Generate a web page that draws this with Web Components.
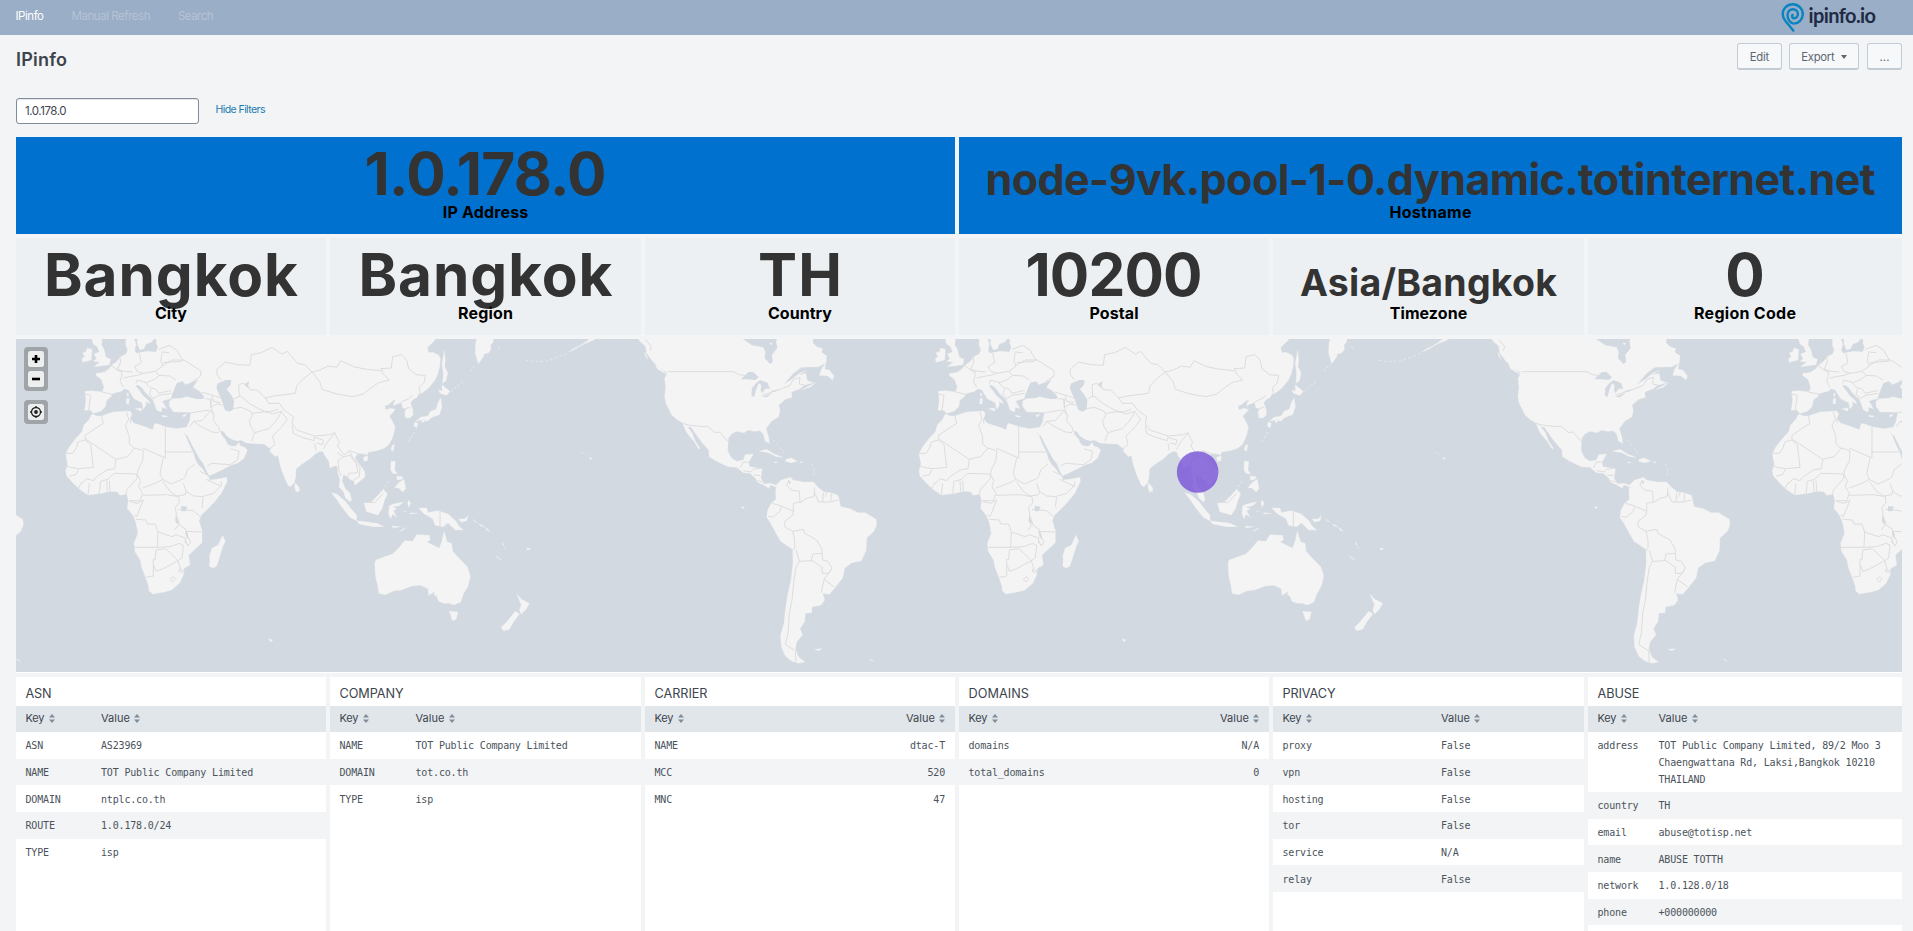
<!DOCTYPE html>
<html lang="en"><head><meta charset="utf-8"><title>IPinfo</title>
<style>
html,body{margin:0;height:100%;overflow:hidden;background:#f2f4f5;font-family:Inter,"Open Sans",sans-serif;color:#3c444d}
</style></head><body>
<ip-dashboard></ip-dashboard>
<script>
const define=(name,html,setup)=>customElements.define(name,class extends HTMLElement{
  connectedCallback(){
    if(this.shadowRoot)return;
    const t=document.createElement('template');t.innerHTML=html;
    this.attachShadow({mode:'open'}).append(t.content.cloneNode(true));
    if(setup)setup.call(this,this.shadowRoot);
  }
});

/* Text tracked so that it fills a given width. */
define('fit-text','<style>:host{display:inline-block;white-space:pre}</style><span><slot></slot></span>',function(r){
  const s=r.querySelector('span'),w=+this.getAttribute('w'),n=this.textContent.length;
  const ls=(w-s.getBoundingClientRect().width)/Math.max(1,n-1);
  if(w&&n>1){s.style.letterSpacing=ls+'px';s.style.marginRight=-ls+'px';}
});

define('nav-bar',`<style>
:host{display:flex;height:35px;box-sizing:border-box;background:#9aaec7;align-items:flex-start;padding:6px 37px 0 15.500px;font-size:11.5px;line-height:21px}
nav{display:flex;gap:27.500px;flex:1;color:#b6c3d3}
b{font-weight:400;color:#fff}
.logo{display:flex;gap:4px;margin-top:-3px;align-items:flex-start}
.logo span{font:700 20px/24px Lato,sans-serif;color:#1f2b45}
svg{display:block}
</style><nav><b><fit-text w="28.5">IPinfo</fit-text></b><fit-text w="79">Manual Refresh</fit-text><fit-text w="35.5">Search</fit-text></nav>
<div class="logo"><svg width="24" height="30" viewBox="0 0 24 30" fill="none" stroke="#0a84c1" stroke-width="2.400" stroke-linecap="round" stroke-linejoin="round"><path d="M12.300 27.500 4.600 18.300C2.800 16.200 1.700 14 1.700 11.200 1.700 5.600 6.200 1.300 11.700 1.300 17.300 1.300 21.800 5.700 21.800 11.200 21.800 16.500 17.600 20.600 13 20.600 9.200 20.600 6.700 16.500 6.500 12.300 6.300 8.700 8.900 6.300 11.900 6.300 14.800 6.300 16.900 8.500 16.900 11.100 16.900 13.500 15.200 15.300 12.900 15.200 11.200 15.100 10.500 13.200 11.600 11.900"/></svg><span><fit-text w="67.500">ipinfo.io</fit-text></span></div>`);

define('tool-button',`<style>
:host{display:flex;align-items:center;justify-content:center;gap:6px;box-sizing:border-box;height:27px;border:1px solid #c3cbd4;border-bottom-width:2px;border-radius:3px;background:#f7f8fa;font-size:11.300px;color:#5c6773;padding-top:1px}
</style><slot></slot>`);

define('page-head',`<style>
:host{display:block}
.row{display:flex;justify-content:space-between;padding:8px 11px 0 16px;height:55px}
h1{margin:5px 0 0;font-size:18px;line-height:24px;font-weight:600;color:#3c444d}
.tools{display:flex;gap:7px}
.filters{display:flex;align-items:center;padding-left:16px;gap:16.500px;height:26px;font-size:10.500px}
.in{box-sizing:border-box;width:183px;height:26px;border:1px solid #818d99;border-radius:3px;background:#fff;box-shadow:inset 0 1px 1px #e4e7ea;padding:0 8px;font-size:11.500px;line-height:24px;color:#3c444d}
a{color:#1e7bb0;line-height:24px;align-self:flex-start}
</style><div class="row"><h1><fit-text w="51">IPinfo</fit-text></h1><div class="tools">
<tool-button style="width:45px"><fit-text w="19.500">Edit</fit-text></tool-button><tool-button style="width:70px"><fit-text w="33.500">Export</fit-text><svg width="6" height="4" viewBox="0 0 6 4"><path d="M0 0h6L3 4z" fill="#5c6773"/></svg></tool-button><tool-button style="width:35px;margin-left:1px"><fit-text w="10" style="margin-top:1px">...</fit-text></tool-button></div></div>
<div class="filters"><div class="in"><fit-text w="41.500">1.0.178.0</fit-text></div><a><fit-text w="50">Hide Filters</fit-text></a></div>`);

define('value-tile',`<style>
:host{display:flex;flex-direction:column;align-items:center;height:97px;background:#edf0f2;box-sizing:border-box;overflow:hidden}
:host([blue]){background:#0071ce}
.v{height:58px;display:flex;align-items:baseline;font-weight:700;color:#333}
.v::before{content:"";height:58px;display:inline-block}
.l{font-size:16px;font-weight:700;color:#000;line-height:20px;margin-top:7px;position:relative}
fit-text{line-height:0}
.l fit-text{line-height:20px}
</style><div class="v"></div><div class="l"></div>`,function(r){
  const g=a=>this.getAttribute(a);
  const add=(sel,txt,w)=>{const f=document.createElement('fit-text');f.textContent=txt;f.setAttribute('w',w);r.querySelector(sel).append(f);};
  r.querySelector('.v').style.fontSize=g('size')+'px';
  add('.v',g('value'),g('vw'));add('.l',g('label'),g('lw'));
});

define('kv-table',`<style>
:host{display:block;background:#fff;height:260px;box-sizing:border-box;overflow:hidden}
h2{margin:0;height:29px;box-sizing:border-box;padding:7px 10px 0 9.500px;font-size:12.700px;line-height:20px;font-weight:400;color:#3c444d}
.r{display:grid;grid-template-columns:var(--key) 1fr;padding:5px 10px 5px 9.500px;font:10px/16.660px "DejaVu Sans Mono",monospace;letter-spacing:-.175px;color:#4b535c;white-space:pre}
.r:nth-child(odd of .r){background:#fff}
.r:nth-child(even of .r){background:#f2f4f5}
.r span{position:relative;top:1.400px}
.h{display:grid;grid-template-columns:var(--key) 1fr;padding:0 10px 0 9.500px;height:26px;line-height:24px;background:#e1e6eb;font-size:11px;color:#3c444d}
:host([right]) .h span:last-child,:host([right]) .r span:last-child{text-align:right}
svg{margin-left:4px;vertical-align:-1px}
</style><h2></h2><div class="h"></div>`,function(r){
  r.host.style.setProperty('--key',this.getAttribute('key'));
  r.querySelector('h2').innerHTML='<fit-text w="'+this.getAttribute('tw')+'">'+this.getAttribute('name')+'</fit-text>';
  const a='<svg width="6" height="9" viewBox="0 0 6 9" fill="#818d99"><path d="M0 3.500h6L3 0zM0 5.500h6L3 9z"/></svg>';
  r.querySelector('.h').innerHTML='<span><fit-text w="19">Key</fit-text>'+a+'</span><span><fit-text w="29">Value</fit-text>'+a+'</span>';
  for(const line of this.getAttribute('rows').split(';')){
    const [k,v]=line.split('=');const d=document.createElement('div');d.className='r';
    for(const t of [k,v]){const s=document.createElement('span');s.textContent=t.replaceAll('|','\n');d.append(s);}
    r.append(d);
  }
});

define('world-map',`<style>
:host{display:block;position:relative;height:333px;background:#d3d9e0;border-bottom:1px solid #fff}
svg.m{display:block;width:100%;height:333px}
.ctl{position:absolute;left:8px;top:8px;width:24px;display:flex;flex-direction:column;gap:9px}
.g{background:#9fa4a8;border-radius:4px;padding:4px;display:flex;flex-direction:column;gap:4px}
.b{height:16px;border-radius:2.500px;background:#edeeee;display:grid;place-items:center}
</style>
<svg class="m" viewBox="48 27 5658 999" preserveAspectRatio="none"><defs><g id="w">
<g fill="#f4f4f4" stroke="#f4f4f4" stroke-width="1" stroke-linejoin="round">
<path d="M470 20H1310L1303 32 1295 40 1282 52 1286 68 1298 67 1315 75 1321 85 1319 110 1313 132 1305 150 1285 175 1265 190 1256 192 1250 203 1240 208 1231 218 1238 238 1239 255 1230 263 1217 264 1214 246 1219 238 1208 233 1204 217 1186 224 1180 228 1182 216 1190 208 1178 212 1165 224 1154 228 1157 240 1171 235 1186 238 1178 248 1168 258 1178 276 1185 290 1181 312 1174 330 1166 345 1152 355 1130 362 1106 366 1100 376 1094 372 1075 370 1064 383 1072 396 1084 410 1094 425 1095 440 1084 450 1064 466 1062 452 1049 448 1042 439 1030 434 1026 452 1030 462 1036 476 1050 490 1055 510 1050 515 1036 503 1030 484 1017 470 1020 450 1014 430 1012 408 1003 408 990 413 986 392 975 378 970 366 960 364 945 372 932 385 905 403 888 417 887 442 882 460 871 470 864 466 850 434 840 404 834 376 826 380 808 362 814 358 803 350 792 342 765 341 740 339 722 330 712 333 695 328 680 318 670 304 661 303 664 314 676 328 682 342 692 348 707 349 717 337 721 348 734 352 742 361 732 385 715 398 692 406 665 420 645 430 627 437 621 425 610 400 600 388 590 370 580 352 568 328 562 316 564 308 560 318 548 302 558 320 568 345 580 368 584 385 595 405 606 415 618 432 628 444 626 450 650 448 680 442 681 455 665 488 645 514 620 540 603 556 597 572 606 602 606 638 588 655 566 675 570 705 552 715 550 735 538 760 515 780 492 786 458 792 447 782 446 768 436 740 425 712 421 690 405 665 402 640 414 610 408 578 400 558 382 535 385 512 380 492 360 496 352 485 330 484 305 490 264 495 242 480 222 462 200 438 197 422 203 402 197 372 208 350 228 325 246 305 252 285 268 268 276 252 290 258 305 258 340 246 390 243 396 252 390 266 402 280 440 292 458 300 464 280 480 284 495 290 530 296 560 292 568 275 571 260 574 247 545 246 520 246 508 228 508 214 518 206 545 205 560 200 590 207 615 206 598 184 580 172 590 152 570 158 556 164 546 156 530 160 526 175 516 195 512 206 498 209 486 214 492 222 500 236 486 232 484 246 470 240 464 222 458 208 440 192 425 172 412 164 407 168 420 184 428 196 446 212 450 222 437 214 438 226 430 238 426 218 402 206 386 180 374 176 364 184 346 188 336 192 333 200 320 210 316 230 302 244 280 250 270 240 254 241 258 210 255 184 275 182 307 186 312 172 304 148 287 136 290 130 306 128 326 118 335 106 350 95 362 80 378 72 383 60 377 44 378 26 400 20 408 42 404 62 410 70 440 64 468 66 474 52 468 38Z"/>
<path d="M412 20 412 42 420 60 432 56 438 42 455 36 466 20ZM285 20 275 24 280 42 292 50 298 66 282 72 290 86 280 94 300 96 282 110 300 108 328 104 332 88 318 82 312 58 304 44 306 30 300 20ZM262 54 276 58 274 90 248 97 246 86 254 80 248 68 258 66ZM1333 62 1336 90 1334 110 1343 128 1338 152 1328 160 1330 130 1326 100ZM1326 165 1350 184 1340 196 1320 190 1316 180 1326 184ZM1322 204 1326 230 1318 254 1306 258 1292 264 1282 274 1270 268 1248 274 1262 262 1284 258 1292 244 1308 238 1314 218ZM1244 276 1254 280 1250 294 1242 288ZM1264 268 1276 272 1266 278ZM1183 343 1180 364 1173 360 1176 347ZM1090 382 1104 378 1102 392 1092 394ZM1173 394 1186 394 1184 420 1192 432 1178 430 1172 418ZM1196 458 1212 448 1217 476 1208 486 1196 474 1184 474ZM1190 438 1208 440 1206 448 1192 450ZM1150 478 1162 492 1154 510 1146 536 1134 555 1100 545 1092 520 1114 516 1134 496ZM994 488 1010 492 1036 514 1056 540 1070 556 1070 572 1050 562 1026 532 1010 508ZM1070 572 1100 576 1130 580 1152 590 1120 590 1078 582ZM1168 528 1180 522 1210 516 1196 528 1176 530 1190 536 1180 542 1190 562 1178 552 1172 566 1166 552ZM1256 534 1280 534 1284 548 1312 542 1344 552 1368 574 1376 588 1390 600 1366 600 1344 578 1330 590 1306 586 1298 566 1280 556 1270 550ZM1376 568 1396 566 1404 556 1400 572 1384 576ZM1332 604 1342 636 1355 640 1358 664 1374 682 1402 710 1411 738 1404 768 1390 792 1382 816 1362 825 1348 820 1332 820 1316 814 1310 798 1302 794 1306 784 1286 796 1284 776 1262 766 1236 768 1204 780 1182 782 1156 794 1136 790 1134 770 1127 742 1124 700 1128 690 1150 682 1178 672 1196 654 1214 632 1238 634 1250 614 1288 616 1290 630 1280 636 1318 655 1326 632ZM1348 844 1374 846 1368 868 1358 872ZM668 616 676 634 668 650 650 708 638 714 628 708 630 688 628 680 636 654 654 646ZM886 458 898 474 898 484 888 485 884 472ZM380 206 388 206 386 222 379 222ZM380 190 386 190 384 202ZM406 236 424 234 424 244ZM486 256 502 258 500 261 488 260ZM548 256 560 252 552 262ZM1432 20 1427 40 1426 70 1435 101 1450 80 1452 72 1466 68 1473 58 1472 44 1480 36 1480 20ZM806 926 818 930 812 936ZM1226 510 1232 520 1226 532 1223 518ZM1232 548 1252 550 1230 552ZM1176 588 1200 590 1180 594ZM1198 604 1218 592 1210 600Z"/>
<path d="M1424 108 1412 124M1388 154 1354 184M1244 306 1226 334M1494 50 1504 58M1166 454 1150 476M1210 544 1220 544" fill="none" stroke-width="2" stroke-dasharray="8 5"/>
<g transform="translate(1410)"><path d="M500 20 512 36 526 48 530 70 548 94 562 108 580 122 590 134 584 146 587 170 584 200 587 218 598 240 606 256 620 268 637 278 648 304 658 318 672 334 687 358 690 354 676 334 666 308 652 290 664 292 680 316 698 340 716 360 718 380 740 394 774 410 800 412 820 428 840 430 858 446 862 456 880 464 896 474 902 464 918 472 917 490 918 508 904 520 893 540 890 562 902 580 916 606 932 634 968 658 969 700 963 750 952 800 946 840 942 880 932 916 934 950 946 978 966 994 986 1000 1005 996 986 982 976 956 980 936 998 914 990 896 1004 874 1006 850 1025 848 1026 830 1052 826 1064 810 1058 790 1078 793 1094 774 1118 744 1124 714 1146 698 1174 692 1188 662 1190 624 1212 604 1220 584 1218 568 1186 548 1164 548 1140 536 1112 530 1108 512 1104 496 1082 488 1062 486 1044 472 1030 456 1000 456 968 450 962 442 934 450 918 466 902 460 882 462 872 444 876 416 850 412 838 410 836 396 850 372 826 374 820 390 800 394 784 384 773 362 775 325 784 312 800 304 822 308 834 300 852 304 870 302 880 312 886 334 898 340 896 322 888 296 904 274 926 260 930 240 926 226 946 208 966 202 964 186 990 176 1002 166 1030 158 1012 152 1008 136 1020 128 1008 122 988 130 968 146 940 164 970 130 994 112 1046 110 1068 98 1070 78 1054 66 1058 56 1040 50 1028 38 1030 20ZM1067 98 1054 118 1048 136 1074 138 1088 150 1092 138 1078 120 1064 118ZM998 178 1036 158 1020 172ZM868 364 890 358 912 372 938 382 920 380 896 368ZM948 388 964 384 982 394 962 398 946 394ZM912 396 924 397 914 399ZM990 395 1000 396 991 398ZM556 104 576 118 594 130 584 130 562 116ZM524 66 534 88 526 78ZM140 792 154 808 178 820 168 838 154 852 148 840 154 824ZM136 844 148 852 130 876 118 898 100 902 94 892 110 876ZM76 677 96 690 84 684ZM170 654 182 656 172 660ZM358 382 366 386 360 388ZM1034 958 1056 956 1046 962ZM1198 986 1212 994 1206 992ZM8 568 22 578 12 572ZM28 582 44 590 32 588ZM46 592 60 604 50 600ZM96 636 102 646 98 644ZM296 66 310 56 328 48 350 34 358 27 380 20 372 30 346 40 314 58ZM814 530 824 532 818 536Z"/><path d="M290 70 262 82 236 92 200 95 160 90M910 330 930 352 946 374M334 366 352 376M1026 402 1034 420 1030 440M104 650 112 668" fill="none" stroke-width="2" stroke-dasharray="8 7" opacity=".8"/></g></g>
<g fill="#d3d9e0"><path d="M654 160 678 150 694 150 692 164 680 178 694 196 702 210 700 238 688 245 675 240 664 208 654 186 649 172ZM516 196 524 174 532 158 548 154 558 166 572 176 596 182 612 198 606 206 576 204 552 196 534 204 518 202ZM734 162 748 154 744 168 752 176 738 168ZM544 528 562 530 556 544 544 544ZM527 556 536 578 532 584 526 572ZM556 598 564 612 564 628 558 618ZM440 60 452 48 470 42 468 60ZM464 30 470 34 466 46ZM574 160 596 148 582 166Z"/>
<g transform="translate(1410)"><path d="M808 20 826 32 846 46 880 52 886 66 884 84 900 102 908 96 906 74 922 54 918 34 924 20ZM812 148 836 126 850 126 866 142 856 150 832 148ZM858 160 846 174 844 196 852 202 858 180 866 160 874 166 872 180 876 190 886 176 900 176 892 158 870 150ZM876 200 908 188 890 202ZM900 184 928 178 914 186ZM984 136 1010 122 1044 122 1048 132 1034 150 1012 146 1008 130ZM956 450 963 456 958 464ZM898 38 908 40 904 46Z"/></g></g>
<g fill="none" stroke="#dadada" stroke-width="2.800" stroke-linejoin="round">
<path d="M256 192 272 196 266 240M306 186 342 194M312 128 330 104 358 124 366 126 364 142 360 154 370 172M358 76 362 96 352 118 374 124 398 126M418 70 424 98 404 110 412 124 430 130 466 124 488 108 482 92 486 70M370 144 388 140 412 136 430 130M408 160 412 150 440 158 464 148 478 136 466 124M436 158 450 172 468 178 476 190 508 182 514 184M478 136 510 138 528 150M490 98 544 94 548 90 530 60 508 46 476 58M484 66 508 68M488 106 516 90 552 90 602 122 602 138 576 156M454 176 448 192 460 206 476 196 514 190M604 186 638 196 668 206M616 206 634 208 632 232 650 222 668 226M636 198 640 214 662 218M574 248 630 240 642 256 636 242 630 208M642 256 640 272 656 292 660 306M630 244 606 272 580 274 570 290M580 274 600 288 636 306 656 308M652 136 650 118 676 96 712 104 750 106 754 74 784 68 816 52 846 72 862 64 892 100 914 104 936 126M664 150 652 136M718 198 716 164 730 160 752 180 772 180 796 204 820 198 886 190 890 168 906 150 936 126M936 126 960 120 984 108 1010 112 1022 92 1060 110 1100 118 1142 122 1150 132 1168 150 1136 158 1110 176 1090 192 1058 200 1010 192 966 178 960 156 936 126M1150 124 1142 116 1174 114 1178 80 1204 74 1220 90 1226 116 1248 134 1276 136 1272 158 1258 172 1260 190M1204 216 1226 206 1238 196M1216 236 1232 232M698 236 724 232 752 244 758 256 748 272 752 290 764 308 754 334M702 206 722 198 748 220 776 236 802 248 834 238M758 250 802 244 816 252 846 244 826 276 806 296 764 308M796 204 806 220 838 220 852 240 880 260 876 280 890 300 944 318 990 314 1004 308 1018 338 1012 348 1032 374 1050 362 1080 374M846 248 862 268 846 290 818 318 824 344 810 356M876 286 880 310 906 322 942 332 944 320M944 340 948 362M944 322 970 330 968 344 950 338M970 358 982 336 1004 310M1012 368 1030 380 1014 392 1016 420 1024 438M1030 380 1050 376 1068 400 1074 428 1048 430 1044 440M1048 362 1060 386 1080 412 1078 440 1062 450M1098 516 1124 518 1150 490M1320 546 1320 592"/>
<path d="M305 258 310 280 288 294 256 316 256 330 234 336 230 352 218 370 198 370M258 328 348 388 382 380 404 354 430 362 428 392 414 420 412 434M380 246 386 268 376 286 388 320 388 342 404 356M390 268 392 280M496 292 496 384 428 354M496 366 578 366M272 344 280 412 236 416 212 412 200 408M272 344 256 330M348 388 344 416 320 420 290 440 280 452 260 446 244 462M208 438 228 434 236 418M244 458 236 474M264 494 268 460M298 490 302 454 324 448 336 436 342 430 410 432 412 444 380 480 378 492M322 484 320 452M330 484 328 452M412 434 422 452 416 470 428 490 420 512 388 512M428 474 470 458 488 448 480 430 490 384M488 448 514 462 550 446 556 440 562 420 584 402M488 454 510 484 530 498 556 494 558 484 550 460M558 484 580 498 610 500 606 530 610 534M600 424 620 434M618 448 662 468 640 490 612 498M428 496 500 494 536 500 538 518 526 532 530 560 540 586 560 600M388 514 412 520 430 510 410 560 402 554M408 568 438 570 442 582 466 582 474 606 516 620 528 614 556 624 556 640M474 606 472 652 402 652M472 652 510 650 538 640 550 646 546 684 534 692 508 666 496 656 468 660 466 688 460 688 460 738 438 742M462 706 468 724 490 716 534 692 542 718M510 748 520 740 526 746 518 756ZM538 718 550 722 546 728 536 724ZM536 584 524 600M536 538 580 542 600 560M556 604 604 606M556 606 572 636 564 648 556 632M622 408 636 400 690 404 712 390 718 364 692 356M664 454 664 470"/>
<g transform="translate(1410)"><path d="M594 125 790 125 808 134 836 138M876 196 930 178 960 166 970 148 990 142 988 162 1006 166M526 28 544 50 540 62M637 280 660 286 702 290 712 288 736 308 748 306 774 334M810 414 820 396 836 396M820 422 842 426 850 418 872 414M852 436 870 436M862 452 878 456M918 470 916 478M956 450 950 466 964 480 988 484 990 516 970 520 970 544 934 528 906 520M934 530 930 544 908 562 894 558M970 544 968 556 944 574 944 590 968 604 974 630 974 656 968 660M968 604 1000 598 1004 610 1040 630 1056 658 1056 670 1028 672 1024 692 988 694 978 660M988 694 978 712 972 750 966 810 958 850 954 910 946 944 976 962 978 996M1024 690 1056 712 1056 730 1076 730 1086 714 1074 694 1058 690 1056 670M1084 718 1062 748 1092 770M1062 748 1054 788M990 518 1012 504 1032 500 1034 472M1034 488 1046 516 1080 516 1104 510M1060 488 1058 516M1084 490 1082 514M1070 488 1066 500"/></g></g></g></defs>
<use href="#w" x="-2560"/><use href="#w"/><use href="#w" x="2560"/><use href="#w" x="5120"/>
<circle cx="3593" cy="426" r="62.500" fill="#7a55d8" fill-opacity=".82"/></svg>
<div class="ctl"><div class="g"><div class="b"><svg width="8" height="8"><path d="M4 0v8M0 4h8" stroke="#000" stroke-width="2.600"/></svg></div><div class="b"><svg width="8" height="8"><path d="M0 4h8" stroke="#000" stroke-width="2.600"/></svg></div></div>
<div class="g"><div class="b"><svg width="12" height="12" fill="none" stroke="#222" stroke-width="1.300"><circle cx="6" cy="6" r="4.500"/><circle cx="6" cy="6" r="1.900" fill="#222" stroke="none"/><path d="M6 0v2M6 10v2M0 6h2M10 6h2"/></svg></div></div></div>`);

define('ip-dashboard',`<style>
:host{display:block}
.two,.six,.tabs{display:grid;column-gap:4px;margin:0 11px 0 16px}
.two{grid-template-columns:939px 943px;margin-top:13px}
.six,.tabs{grid-template-columns:310px 311px 310px 310px 311px 314px;margin-top:4px}
world-map{margin:4px 11px 0 16px}
</style><nav-bar></nav-bar><page-head></page-head>
<div class="two"><value-tile blue size="58.500" value="1.0.178.0" vw="242" label="IP Address" lw="85.500"></value-tile><value-tile blue size="43" value="node-9vk.pool-1-0.dynamic.totinternet.net" vw="890" label="Hostname" lw="82"></value-tile></div>
<div class="six"><value-tile size="58.500" value="Bangkok" vw="254" label="City" lw="32"></value-tile><value-tile size="58.500" value="Bangkok" vw="254" label="Region" lw="55"></value-tile><value-tile size="58.500" value="TH" vw="84" label="Country" lw="64"></value-tile><value-tile size="58.500" value="10200" vw="177" label="Postal" lw="49"></value-tile><value-tile size="37.500" value="Asia/Bangkok" vw="257" label="Timezone" lw="77.500"></value-tile><value-tile size="58.500" value="0" vw="0" label="Region Code" lw="102"></value-tile></div>
<world-map></world-map>
<div class="tabs">
<kv-table name="ASN" tw="26" key="75.500px" rows="ASN=AS23969;NAME=TOT Public Company Limited;DOMAIN=ntplc.co.th;ROUTE=1.0.178.0/24;TYPE=isp"></kv-table>
<kv-table name="COMPANY" tw="64" key="76px" rows="NAME=TOT Public Company Limited;DOMAIN=tot.co.th;TYPE=isp"></kv-table>
<kv-table right name="CARRIER" tw="53" key="100px" rows="NAME=dtac-T;MCC=520;MNC=47"></kv-table>
<kv-table right name="DOMAINS" tw="60.500" key="100px" rows="domains=N/A;total_domains=0"></kv-table>
<kv-table name="PRIVACY" tw="53" key="158.500px" rows="proxy=False;vpn=False;hosting=False;tor=False;service=N/A;relay=False"></kv-table>
<kv-table name="ABUSE" tw="42" key="61px" rows="address=TOT Public Company Limited, 89/2 Moo 3|Chaengwattana Rd, Laksi,Bangkok 10210|THAILAND;country=TH;email=abuse@totisp.net;name=ABUSE TOTTH;network=1.0.128.0/18;phone=+000000000; = "></kv-table>
</div>`);
</script></body></html>
